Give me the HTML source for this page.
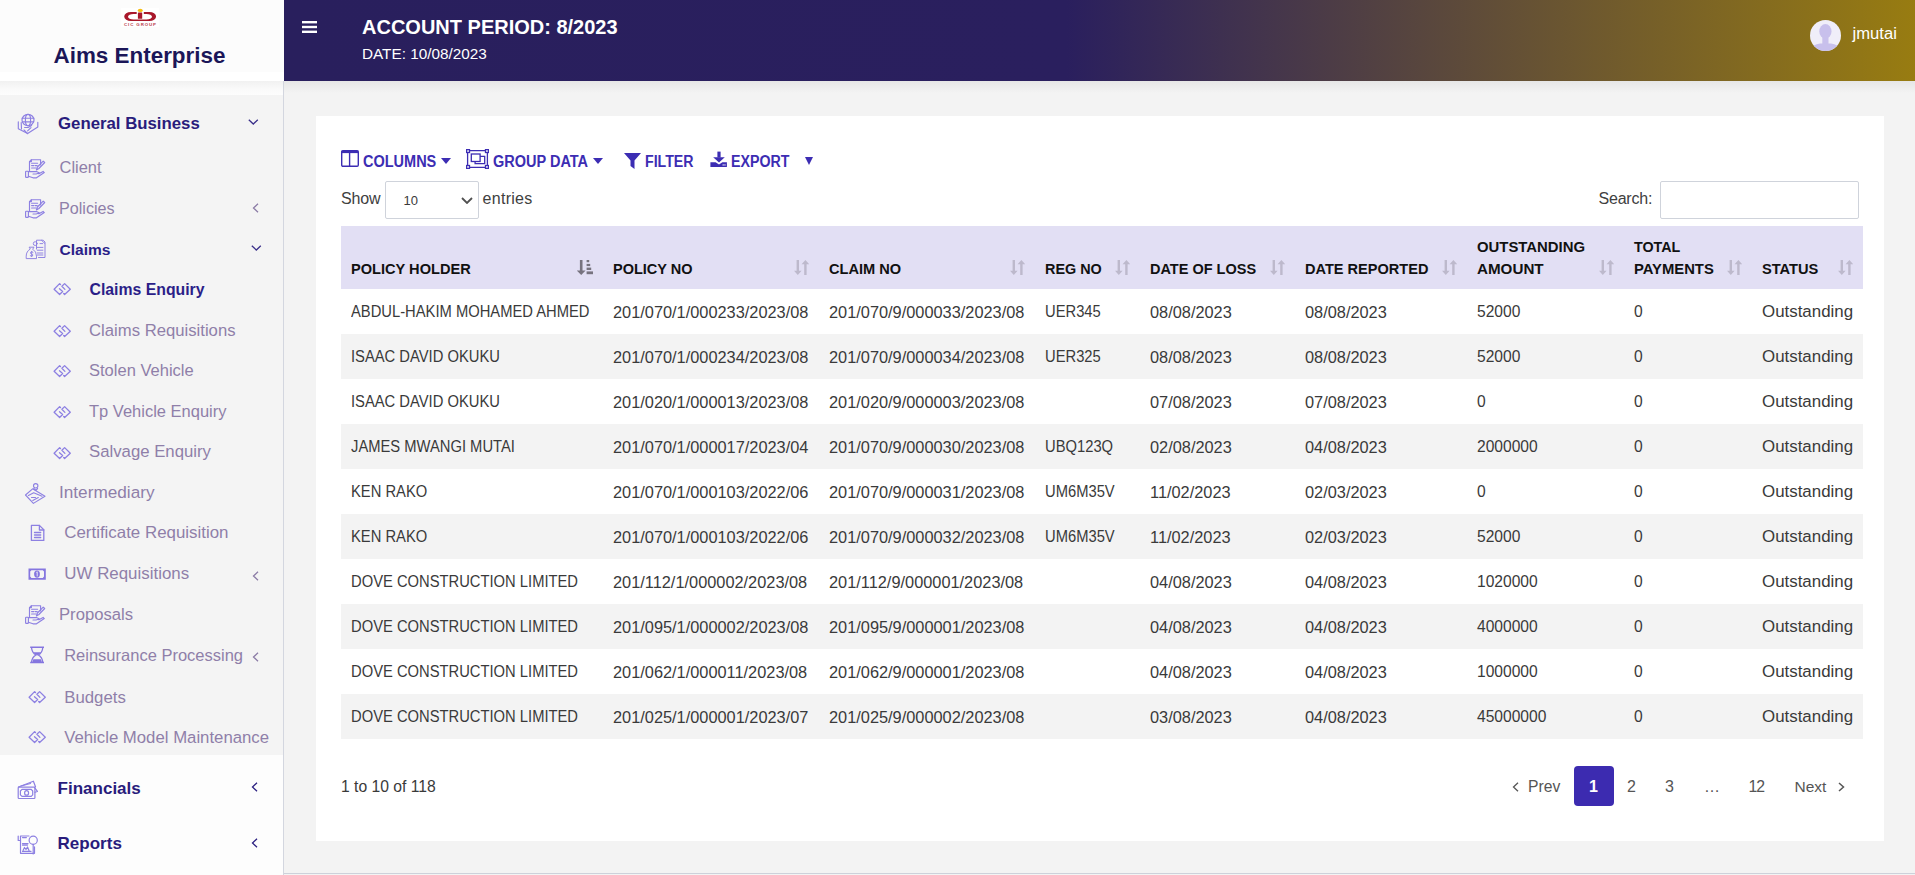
<!DOCTYPE html>
<html><head><meta charset="utf-8"><style>
*{box-sizing:border-box;margin:0;padding:0}
html,body{width:1915px;height:875px;overflow:hidden;background:#f3f3f3;font-family:"Liberation Sans",sans-serif}
.a{position:absolute;white-space:nowrap}
#side{position:absolute;left:0;top:0;width:284px;height:875px;background:#fdfdfd;border-right:1px solid #d3d6df}
#side .top{position:absolute;left:0;top:0;width:284px;height:81px;background:linear-gradient(#fcfcfc 72px,#fff 72px)}
#side .gray{position:absolute;left:0;top:95px;width:283px;height:660px;background:#f4f4f4}
#side .shadow{position:absolute;left:0;top:81px;width:283px;height:14px;background:linear-gradient(#f1f1f1,#fafafa 60%,#fdfdfd)}
.brand{left:54px;top:43px;font-weight:bold;font-size:22px;line-height:24px;color:#1c1760}
.mt{font-size:16px;color:#8f7fa9;line-height:20px}
.mb{font-weight:bold;color:#291d7d}
.mh{font-weight:bold;color:#20186f;font-size:17px}
#hdr{position:absolute;left:284px;top:0;width:1631px;height:81px;background:linear-gradient(to right,#291f5d 0%,#2a1f5e 48%,#987c11 100%)}
#hdrsh{position:absolute;left:284px;top:81px;width:1631px;height:12px;background:linear-gradient(#e6e6e6,#f3f3f3)}
.card{position:absolute;left:316px;top:116px;width:1568px;height:725px;background:#fff}
.tb{font-weight:bold;font-size:14.5px;color:#3c2db3;line-height:20px}
table{position:absolute;left:341px;top:226px;border-collapse:collapse;table-layout:fixed;width:1522px}
th{background:#e2dff4;height:63px;text-align:left;vertical-align:bottom;padding:0 10px 9px 10px;font-size:14.5px;font-weight:bold;color:#111;line-height:22px;position:relative}
th svg{position:absolute;right:10px;top:34px}
td{height:45px;padding:0 10px;font-size:16px;color:#3a3a3a;white-space:nowrap;vertical-align:middle;line-height:20px}
tr.g td{background:#f3f3f3}
td span.s{display:inline-block;transform:scaleX(0.922);transform-origin:0 50%}
td.n{font-size:16.35px}
td.d{font-size:15.6px}
td.o{font-size:16.9px}
.pg{font-size:16px;color:#555;line-height:20px}
</style></head><body>
<div id="side"><div class="top"></div><div class="shadow"></div><div class="gray"></div></div>
<div class="a" style="left:53.5px;top:46.23px;font-size:22.43px;line-height:20px;color:#1b1658;font-weight:bold;">Aims Enterprise</div>
<div class="a" style="left:121px;top:8px;width:38px;height:19px;background:#fff"></div>
<svg class="a" style="left:121px;top:4px" width="40" height="24" viewBox="0 0 40 24" ><path d="M10 8 A6.8 4.5 0 0 0 10 17 H28.3 A6.8 4.5 0 0 0 28.3 8 Z M12.5 9.9 A5.5 2.8 0 0 0 12.5 15.5 H25.5 A5.5 2.8 0 0 0 25.5 9.9 Z" fill="#a9182b" fill-rule="evenodd"/><rect x="15.7" y="7.5" width="7.1" height="2.6" fill="#fff"/><rect x="16.9" y="8.6" width="4.3" height="6.2" rx="0.4" fill="#a9182b"/><ellipse cx="19.25" cy="6.45" rx="2.5" ry="1.6" fill="#f6bd12"/><text x="3" y="22.1" font-size="4.4" font-weight="bold" fill="#b8404c" textLength="32" font-family="Liberation Sans">CIC GROUP</text></svg>
<div class="a" style="left:58px;top:114.08px;font-size:16.8px;line-height:20px;color:#291c7c;font-weight:bold;">General Business</div>
<div class="a" style="left:59.5px;top:157.39px;font-size:16.47px;line-height:20px;color:#8f7fa9;font-weight:normal;">Client</div>
<div class="a" style="left:59px;top:197.51px;font-size:16.14px;line-height:20px;color:#8f7fa9;font-weight:normal;">Policies</div>
<div class="a" style="left:59.5px;top:239.61px;font-size:15.55px;line-height:20px;color:#2b1e88;font-weight:bold;">Claims</div>
<div class="a" style="left:89.5px;top:279.93px;font-size:15.8px;line-height:20px;color:#2b1e88;font-weight:bold;">Claims Enquiry</div>
<div class="a" style="left:89px;top:321.31px;font-size:16.7px;line-height:20px;color:#8f7fa9;font-weight:normal;">Claims Requisitions</div>
<div class="a" style="left:89px;top:361.27px;font-size:16.53px;line-height:20px;color:#8f7fa9;font-weight:normal;">Stolen Vehicle</div>
<div class="a" style="left:89px;top:401.29px;font-size:16.49px;line-height:20px;color:#8f7fa9;font-weight:normal;">Tp Vehicle Enquiry</div>
<div class="a" style="left:89px;top:442.40px;font-size:16.75px;line-height:20px;color:#8f7fa9;font-weight:normal;">Salvage Enquiry</div>
<div class="a" style="left:59px;top:482.44px;font-size:17.2px;line-height:20px;color:#8f7fa9;font-weight:normal;">Intermediary</div>
<div class="a" style="left:64.3px;top:522.95px;font-size:16.89px;line-height:20px;color:#8f7fa9;font-weight:normal;">Certificate Requisition</div>
<div class="a" style="left:64.3px;top:563.94px;font-size:16.9px;line-height:20px;color:#8f7fa9;font-weight:normal;">UW Requisitions</div>
<div class="a" style="left:59px;top:604.53px;font-size:16.66px;line-height:20px;color:#8f7fa9;font-weight:normal;">Proposals</div>
<div class="a" style="left:64.2px;top:645.38px;font-size:16.5px;line-height:20px;color:#8f7fa9;font-weight:normal;">Reinsurance Processing</div>
<div class="a" style="left:64.2px;top:687.58px;font-size:16.81px;line-height:20px;color:#8f7fa9;font-weight:normal;">Budgets</div>
<div class="a" style="left:64.2px;top:727.90px;font-size:16.75px;line-height:20px;color:#8f7fa9;font-weight:normal;">Vehicle Model Maintenance</div>
<div class="a" style="left:57.5px;top:779.09px;font-size:17.05px;line-height:20px;color:#291c7c;font-weight:bold;">Financials</div>
<div class="a" style="left:57.5px;top:833.69px;font-size:17.05px;line-height:20px;color:#291c7c;font-weight:bold;">Reports</div>
<svg class="a" style="left:17px;top:112px" width="22" height="23" viewBox="0 0 22 23" ><g fill="none" stroke="#8d80e2" stroke-width="1.15" stroke-linejoin="round" stroke-linecap="round"><ellipse cx="11" cy="8" rx="6" ry="5.7"/><ellipse cx="11" cy="8" rx="2.6" ry="5.7"/><path d="M5.3 6.2h11.4 M5.3 9.8h11.4"/><path d="M1.3 9.8 V16.8 L10.6 21.6 L20.8 15 V10.2"/><path d="M4.2 10.5 L4.5 17 M10.6 21.6 L7 18 M10.6 18.8 L14 15.6 M7.6 15.5 h3.5 l3.5 -2"/></g></svg>
<svg class="a" style="left:248px;top:118.5px" width="11" height="6" viewBox="0 0 11 6" ><path d="M0.8 0.8 L5.3 5 L9.8 0.8" fill="none" stroke="#3a2f8a" stroke-width="1.3"/></svg>
<svg class="a" style="left:25px;top:159px" width="21" height="20" viewBox="0 0 21 20" ><g fill="none" stroke="#8d80e2" stroke-width="1.15" stroke-linejoin="round" stroke-linecap="round"><path d="M4.5 12 V2.6 L6.4 0.7 H15.6 V6"/><path d="M4.5 2.6 H6.4 V0.7"/><path d="M6.6 4.2h6 M6.6 6.6h2.3 M10.2 6.6h2 M6.6 9h4.5"/><path d="M11.4 11 l1-3 l5.8-5.9 l1.5 1.4 l-5.8 6z"/><rect x="0.6" y="12.2" width="2.8" height="6.2" rx="0.7"/><path d="M3.4 12.6 H11.5 l3 1.4 l-3.5 1 H8 M3.4 17.3 l4.6 1.5 h3.5 l7.8-5.2 l-1.2-1.2 l-4.2 2.4"/></g></svg>
<svg class="a" style="left:25px;top:199px" width="21" height="20" viewBox="0 0 21 20" ><g fill="none" stroke="#8d80e2" stroke-width="1.15" stroke-linejoin="round" stroke-linecap="round"><path d="M4.5 12 V2.6 L6.4 0.7 H15.6 V6"/><path d="M4.5 2.6 H6.4 V0.7"/><path d="M6.6 4.2h6 M6.6 6.6h2.3 M10.2 6.6h2 M6.6 9h4.5"/><path d="M11.4 11 l1-3 l5.8-5.9 l1.5 1.4 l-5.8 6z"/><rect x="0.6" y="12.2" width="2.8" height="6.2" rx="0.7"/><path d="M3.4 12.6 H11.5 l3 1.4 l-3.5 1 H8 M3.4 17.3 l4.6 1.5 h3.5 l7.8-5.2 l-1.2-1.2 l-4.2 2.4"/></g></svg>
<svg class="a" style="left:252px;top:203px" width="7" height="10" viewBox="0 0 7 10" ><path d="M6 0.8 L1.5 5 L6 9.2" fill="none" stroke="#8a7aa5" stroke-width="1.3"/></svg>
<svg class="a" style="left:20px;top:236px" width="27" height="25" viewBox="0 0 27 25" ><g fill="none" stroke="#8d80e2" stroke-width="0.95" stroke-linejoin="round" stroke-linecap="round"><path d="M16.5 13 V4.2 H23.2 L25 6 V21.5 H18.5"/><path d="M21.5 4.3 L24.8 7.4"/><circle cx="15.2" cy="7.6" r="1.9"/><path d="M20 7.6h2.7 M17.3 11.4h5.6 M17.3 14.2h5.6 M17.3 17h5.6 M17.3 19h5.6"/><path d="M9.5 11.2 h4.5 l-1.3 2 q3.8 2.2 3.8 7 v2.4 H6.2 v-2.4 q0-4.8 3.8-7z"/><path d="M13 16.3 q-1.5-1.2-2.4 0 q-0.7 1.2 1.2 1.8 q1.6 0.6 0.7 1.8 q-1 1-2.3-0.2 M11.7 15.3 v5.2"/></g></svg>
<svg class="a" style="left:251px;top:245px" width="11" height="6" viewBox="0 0 11 6" ><path d="M0.8 0.8 L5.3 5 L9.8 0.8" fill="none" stroke="#3a2f8a" stroke-width="1.3"/></svg>
<svg class="a" style="left:50px;top:280.0px" width="26" height="20" viewBox="0 0 26 20" ><g fill="none" stroke="#8d80e2" stroke-width="1.3" stroke-linejoin="round" stroke-linecap="round"><path d="M10.5 4.5 L9.6 3.6 L4.1 9.2 L9.6 14.5 L12.6 11.5 L9.5 8.8"/><path d="M13.7 13.5 L14.6 14.5 L20.3 9.2 L14.6 3.6 L11.9 6.3 L14.9 9.4"/></g></svg>
<svg class="a" style="left:50px;top:321.7px" width="26" height="20" viewBox="0 0 26 20" ><g fill="none" stroke="#8d80e2" stroke-width="1.3" stroke-linejoin="round" stroke-linecap="round"><path d="M10.5 4.5 L9.6 3.6 L4.1 9.2 L9.6 14.5 L12.6 11.5 L9.5 8.8"/><path d="M13.7 13.5 L14.6 14.5 L20.3 9.2 L14.6 3.6 L11.9 6.3 L14.9 9.4"/></g></svg>
<svg class="a" style="left:50px;top:361.7px" width="26" height="20" viewBox="0 0 26 20" ><g fill="none" stroke="#8d80e2" stroke-width="1.3" stroke-linejoin="round" stroke-linecap="round"><path d="M10.5 4.5 L9.6 3.6 L4.1 9.2 L9.6 14.5 L12.6 11.5 L9.5 8.8"/><path d="M13.7 13.5 L14.6 14.5 L20.3 9.2 L14.6 3.6 L11.9 6.3 L14.9 9.4"/></g></svg>
<svg class="a" style="left:50px;top:402.5px" width="26" height="20" viewBox="0 0 26 20" ><g fill="none" stroke="#8d80e2" stroke-width="1.3" stroke-linejoin="round" stroke-linecap="round"><path d="M10.5 4.5 L9.6 3.6 L4.1 9.2 L9.6 14.5 L12.6 11.5 L9.5 8.8"/><path d="M13.7 13.5 L14.6 14.5 L20.3 9.2 L14.6 3.6 L11.9 6.3 L14.9 9.4"/></g></svg>
<svg class="a" style="left:50px;top:443.7px" width="26" height="20" viewBox="0 0 26 20" ><g fill="none" stroke="#8d80e2" stroke-width="1.3" stroke-linejoin="round" stroke-linecap="round"><path d="M10.5 4.5 L9.6 3.6 L4.1 9.2 L9.6 14.5 L12.6 11.5 L9.5 8.8"/><path d="M13.7 13.5 L14.6 14.5 L20.3 9.2 L14.6 3.6 L11.9 6.3 L14.9 9.4"/></g></svg>
<svg class="a" style="left:20px;top:480px" width="27" height="26" viewBox="0 0 27 26" ><g fill="none" stroke="#8d80e2" stroke-width="1.1" stroke-linejoin="round" stroke-linecap="round"><circle cx="15.7" cy="5.8" r="2.2"/><path d="M13.8 8.5 l1.9 2 l1.9-2"/><path d="M5.5 15 L12.6 8.8 L25 16.3 L13.4 23.4 Z"/><path d="M8.4 15.5 L13.7 12.8 L22 16.3 M11.5 17.5 h4 M12.8 20.5 l5.5-3"/></g></svg>
<svg class="a" style="left:24px;top:520px" width="26" height="24" viewBox="0 0 26 24" ><g fill="none" stroke="#8d80e2" stroke-width="1.3" stroke-linejoin="round" stroke-linecap="round"><path d="M7.4 5.4 H15.4 L19.8 9.7 V20.4 H7.4 Z"/><path d="M15.4 5.4 V10 H19.8"/><path d="M10.5 12.5 h6.2 M10.5 15 h6.2 M10.5 17.5 h6.2"/></g></svg>
<svg class="a" style="left:24px;top:562px" width="26" height="24" viewBox="0 0 26 24" ><path d="M4.5 6.4 H21.8 V17.8 H4.5 Z M7.4 8.2 L6.2 9.5 V14.6 L7.4 15.9 H18.8 L20 14.6 V9.5 L18.8 8.2 Z" fill="#8576df" fill-rule="evenodd"/><ellipse cx="13" cy="12.1" rx="2.9" ry="3.6" fill="#8576df"/><path d="M12.4 10.4 l0.8-0.6 v4.6" stroke="#f4f4f4" stroke-width="0.9" fill="none"/></svg>
<svg class="a" style="left:252px;top:571px" width="7" height="10" viewBox="0 0 7 10" ><path d="M6 0.8 L1.5 5 L6 9.2" fill="none" stroke="#8a7aa5" stroke-width="1.3"/></svg>
<svg class="a" style="left:25px;top:605px" width="21" height="20" viewBox="0 0 21 20" ><g fill="none" stroke="#8d80e2" stroke-width="1.15" stroke-linejoin="round" stroke-linecap="round"><path d="M4.5 12 V2.6 L6.4 0.7 H15.6 V6"/><path d="M4.5 2.6 H6.4 V0.7"/><path d="M6.6 4.2h6 M6.6 6.6h2.3 M10.2 6.6h2 M6.6 9h4.5"/><path d="M11.4 11 l1-3 l5.8-5.9 l1.5 1.4 l-5.8 6z"/><rect x="0.6" y="12.2" width="2.8" height="6.2" rx="0.7"/><path d="M3.4 12.6 H11.5 l3 1.4 l-3.5 1 H8 M3.4 17.3 l4.6 1.5 h3.5 l7.8-5.2 l-1.2-1.2 l-4.2 2.4"/></g></svg>
<svg class="a" style="left:24px;top:642px" width="26" height="24" viewBox="0 0 26 24" ><path d="M6.2 5.2 H20 M6.2 20.6 H20" stroke="#8576df" stroke-width="1.5"/><path d="M7.5 5.5 Q8 11 12 13 Q8 15 7.5 20.5 M18.8 5.5 Q18.3 11 14.3 13 Q18.3 15 18.8 20.5" stroke="#8576df" stroke-width="1.3" fill="none"/><path d="M9.3 10.3 H17 Q15.5 12.5 13.15 13.2 Q10.8 12.5 9.3 10.3 Z M9.3 17.2 H17 Q17.6 18.8 17.9 20.3 H8.4 Q8.7 18.8 9.3 17.2Z" fill="#8576df"/></svg>
<svg class="a" style="left:252px;top:652px" width="7" height="10" viewBox="0 0 7 10" ><path d="M6 0.8 L1.5 5 L6 9.2" fill="none" stroke="#8a7aa5" stroke-width="1.3"/></svg>
<svg class="a" style="left:25.2px;top:687.7px" width="26" height="20" viewBox="0 0 26 20" ><g fill="none" stroke="#8d80e2" stroke-width="1.3" stroke-linejoin="round" stroke-linecap="round"><path d="M10.5 4.5 L9.6 3.6 L4.1 9.2 L9.6 14.5 L12.6 11.5 L9.5 8.8"/><path d="M13.7 13.5 L14.6 14.5 L20.3 9.2 L14.6 3.6 L11.9 6.3 L14.9 9.4"/></g></svg>
<svg class="a" style="left:25.2px;top:728.4px" width="26" height="20" viewBox="0 0 26 20" ><g fill="none" stroke="#8d80e2" stroke-width="1.3" stroke-linejoin="round" stroke-linecap="round"><path d="M10.5 4.5 L9.6 3.6 L4.1 9.2 L9.6 14.5 L12.6 11.5 L9.5 8.8"/><path d="M13.7 13.5 L14.6 14.5 L20.3 9.2 L14.6 3.6 L11.9 6.3 L14.9 9.4"/></g></svg>
<svg class="a" style="left:12px;top:776px" width="28" height="26" viewBox="0 0 28 26" ><g fill="none" stroke="#8d80e2" stroke-width="1.2" stroke-linejoin="round" stroke-linecap="round"><rect x="6.2" y="11.2" width="16.7" height="11.3" rx="0.8"/><path d="M10 13.4 H19.2 L20.7 15 V18.8 L19.2 20.4 H10 L8.4 18.8 V15 Z"/><ellipse cx="14.6" cy="16.9" rx="2" ry="2.3"/><path d="M6.5 11 L21.4 5.2 L23.5 10.8 M22.6 11.5 L25.4 15.4 L23 16.3"/><path d="M9 10 L18.5 7.5"/></g></svg>
<svg class="a" style="left:251px;top:782px" width="7" height="10" viewBox="0 0 7 10" ><path d="M6 0.8 L1.5 5 L6 9.2" fill="none" stroke="#2a1f80" stroke-width="1.3"/></svg>
<svg class="a" style="left:12px;top:831px" width="28" height="26" viewBox="0 0 28 26" ><g fill="none" stroke="#8d80e2" stroke-width="1.2" stroke-linejoin="round" stroke-linecap="round"><path d="M8.5 5 V22.3 H22.5 V15.8 M8.5 5 H17"/><path d="M6.2 5 v4.5 h2.3"/><circle cx="21.2" cy="9.2" r="4.1"/><path d="M21.2 13.3 V23"/><path d="M10.5 6.6h3.9 M10.5 12.7 h5.5 M10.5 14.1h5 M10.5 20.4 h8.5 M11 19.5 l1.5-3 l1.5 2 l1.5-2.5 l1.5 3.5"/></g></svg>
<svg class="a" style="left:251px;top:838px" width="7" height="10" viewBox="0 0 7 10" ><path d="M6 0.8 L1.5 5 L6 9.2" fill="none" stroke="#2a1f80" stroke-width="1.3"/></svg>
<div id="hdr"></div><div id="hdrsh"></div>
<svg class="a" style="left:302px;top:21px" width="15" height="12" viewBox="0 0 15 12" ><rect x="0" y="0" width="15" height="2.4" fill="#fff"/><rect x="0" y="4.8" width="15" height="2.4" fill="#fff"/><rect x="0" y="9.6" width="15" height="2.4" fill="#fff"/></svg>
<div class="a " style="left:362px;top:16px;font-weight:bold;font-size:20px;line-height:22px;color:#fff">ACCOUNT PERIOD: 8/2023</div>
<div class="a" style="left:362px;top:43.50px;font-size:15.3px;line-height:20px;color:#fff;font-weight:normal;">DATE: 10/08/2023</div>
<svg class="a" style="left:1810px;top:20px" width="31" height="31" viewBox="0 0 31 31" ><defs><clipPath id="cc"><circle cx="15.5" cy="15.5" r="15.5"/></clipPath></defs><circle cx="15.5" cy="15.5" r="15.5" fill="#f0eef9"/><g clip-path="url(#cc)" fill="#c8c0ec"><ellipse cx="15.4" cy="11.4" rx="6.1" ry="7.3"/><rect x="12.3" y="15" width="6.2" height="9"/><path d="M-1 33 Q1 24.5 10 23.6 H21 Q30 24.5 32 33z"/></g></svg>
<div class="a " style="left:1852.5px;top:24px;font-size:16.65px;line-height:20px;color:#fff">jmutai</div>
<div class="card"></div>
<svg class="a" style="left:341px;top:150px" width="18" height="17" viewBox="0 0 18 17" ><rect x="0.7" y="0.7" width="16.6" height="15.6" rx="1.2" fill="none" stroke="#3c2db3" stroke-width="1.4"/><rect x="0.7" y="0.7" width="16.6" height="2.4" fill="#3c2db3"/><path d="M8.6 1v15" stroke="#3c2db3" stroke-width="1.4"/></svg>
<div class="a tb" style="left:363px;top:152px;font-size:16px;transform:scaleX(0.906);transform-origin:0 0">COLUMNS</div>
<svg class="a" style="left:441px;top:158px" width="10" height="6" viewBox="0 0 10 6" ><path d="M0 0h10L5 6z" fill="#3c2db3"/></svg>
<svg class="a" style="left:466px;top:149px" width="23" height="20" viewBox="0 0 23 20" ><g fill="none" stroke="#3c2db3" stroke-width="1.3"><path d="M3.5 1.6H19.5 M3.5 18.4H19.5 M1.6 3.5V16.5 M21.4 3.5V16.5"/><rect x="5.3" y="5" width="8.8" height="7.5"/><path d="M14.1 7.4H18.7V14.6H9.1V12.5"/><rect x="0.6" y="0.6" width="2.9" height="2.9" fill="#fff"/><rect x="19.5" y="0.6" width="2.9" height="2.9" fill="#fff"/><rect x="0.6" y="16.5" width="2.9" height="2.9" fill="#fff"/><rect x="19.5" y="16.5" width="2.9" height="2.9" fill="#fff"/></g></svg>
<div class="a tb" style="left:493px;top:152px;font-size:16px;transform:scaleX(0.906);transform-origin:0 0">GROUP DATA</div>
<svg class="a" style="left:593px;top:158px" width="10" height="6" viewBox="0 0 10 6" ><path d="M0 0h10L5 6z" fill="#3c2db3"/></svg>
<svg class="a" style="left:624px;top:153px" width="17" height="16" viewBox="0 0 17 16" ><path d="M0 0h17L10.5 7.5V16L6.5 13V7.5z" fill="#3c2db3"/></svg>
<div class="a tb" style="left:645px;top:152px;font-size:16px;transform:scaleX(0.885);transform-origin:0 0">FILTER</div>
<svg class="a" style="left:710px;top:151px" width="18" height="17" viewBox="0 0 18 17" ><rect x="7.4" y="0.6" width="3.2" height="6" fill="#3c2db3"/><path d="M3.2 6.2H14.8L9 11.6Z" fill="#3c2db3"/><path d="M0.4 11.2H5.6L9 13.6L12.4 11.2H16.9V16.1H0.4Z" fill="#3c2db3"/><rect x="12.6" y="13.3" width="1.1" height="1.3" fill="#fff"/><rect x="14.4" y="13.3" width="1.1" height="1.3" fill="#fff"/></svg>
<div class="a tb" style="left:731px;top:152px;font-size:16px;transform:scaleX(0.888);transform-origin:0 0">EXPORT</div>
<svg class="a" style="left:805px;top:157px" width="8" height="8" viewBox="0 0 8 8" ><path d="M0 0h8L4 8z" fill="#3c2db3"/></svg>
<div class="a" style="left:341px;top:188.96px;font-size:16px;line-height:20px;color:#404040;font-weight:normal;letter-spacing:-0.12px">Show</div>
<div class="a" style="left:385px;top:181px;width:94px;height:38px;border:1px solid #cfd3db;border-radius:2px;background:#fff"></div>
<div class="a " style="left:403.5px;top:193px;font-size:13px;line-height:16px;color:#3a3a3a">10</div>
<svg class="a" style="left:461px;top:197px" width="12" height="7" viewBox="0 0 12 7" ><path d="M1 1l5 5l5-5" fill="none" stroke="#505050" stroke-width="1.8"/></svg>
<div class="a" style="left:482.5px;top:188.96px;font-size:16px;line-height:20px;color:#404040;font-weight:normal;letter-spacing:0.3px">entries</div>
<div class="a" style="left:1598.5px;top:188.96px;font-size:16px;line-height:20px;color:#404040;font-weight:normal;letter-spacing:-0.22px">Search:</div>
<div class="a" style="left:1660px;top:181px;width:199px;height:38px;border:1px solid #cfd3db;border-radius:2px;background:#fff"></div>
<table><colgroup><col style="width:262px"><col style="width:216px"><col style="width:216px"><col style="width:105px"><col style="width:155px"><col style="width:172px"><col style="width:157px"><col style="width:128px"><col style="width:111px"></colgroup><tr><th><span style="font-size:14.6px">POLICY HOLDER</span><svg style="right:10px" width="16" height="15" viewBox="0 0 16 15"><path d="M2.9 0h2.6v10.6h3.1L4.2 15L-0.1 10.6h3z" fill="#77737f"/><g fill="#77737f"><rect x="9.6" y="0" width="2.6" height="2.2"/><rect x="9.6" y="3.9" width="3.6" height="2.2"/><rect x="9.6" y="7.6" width="4.6" height="2.4"/><rect x="9.6" y="11.4" width="6.4" height="2.8"/></g></svg></th><th><span style="font-size:14.5px">POLICY NO</span><svg width="15" height="15" viewBox="0 0 15 15"><path d="M2.6 0h2.4v10.8h2.6L3.8 15L0 10.8h2.6z" fill="#bdb9cc"/><path d="M10.2 15h2.4V4.2h2.6L11.4 0L7.6 4.2h2.6z" fill="#bdb9cc"/></svg></th><th><span style="font-size:14.6px">CLAIM NO</span><svg width="15" height="15" viewBox="0 0 15 15"><path d="M2.6 0h2.4v10.8h2.6L3.8 15L0 10.8h2.6z" fill="#bdb9cc"/><path d="M10.2 15h2.4V4.2h2.6L11.4 0L7.6 4.2h2.6z" fill="#bdb9cc"/></svg></th><th><span style="font-size:14.4px">REG NO</span><svg width="15" height="15" viewBox="0 0 15 15"><path d="M2.6 0h2.4v10.8h2.6L3.8 15L0 10.8h2.6z" fill="#bdb9cc"/><path d="M10.2 15h2.4V4.2h2.6L11.4 0L7.6 4.2h2.6z" fill="#bdb9cc"/></svg></th><th><span style="font-size:14.5px">DATE OF LOSS</span><svg width="15" height="15" viewBox="0 0 15 15"><path d="M2.6 0h2.4v10.8h2.6L3.8 15L0 10.8h2.6z" fill="#bdb9cc"/><path d="M10.2 15h2.4V4.2h2.6L11.4 0L7.6 4.2h2.6z" fill="#bdb9cc"/></svg></th><th><span style="font-size:14.55px">DATE REPORTED</span><svg width="15" height="15" viewBox="0 0 15 15"><path d="M2.6 0h2.4v10.8h2.6L3.8 15L0 10.8h2.6z" fill="#bdb9cc"/><path d="M10.2 15h2.4V4.2h2.6L11.4 0L7.6 4.2h2.6z" fill="#bdb9cc"/></svg></th><th><span style="font-size:14.9px">OUTSTANDING</span><br><span style="font-size:15.2px">AMOUNT</span><svg width="15" height="15" viewBox="0 0 15 15"><path d="M2.6 0h2.4v10.8h2.6L3.8 15L0 10.8h2.6z" fill="#bdb9cc"/><path d="M10.2 15h2.4V4.2h2.6L11.4 0L7.6 4.2h2.6z" fill="#bdb9cc"/></svg></th><th><span style="font-size:14.3px">TOTAL</span><br><span style="font-size:14.8px">PAYMENTS</span><svg width="15" height="15" viewBox="0 0 15 15"><path d="M2.6 0h2.4v10.8h2.6L3.8 15L0 10.8h2.6z" fill="#bdb9cc"/><path d="M10.2 15h2.4V4.2h2.6L11.4 0L7.6 4.2h2.6z" fill="#bdb9cc"/></svg></th><th><span style="font-size:14.65px">STATUS</span><svg width="15" height="15" viewBox="0 0 15 15"><path d="M2.6 0h2.4v10.8h2.6L3.8 15L0 10.8h2.6z" fill="#bdb9cc"/><path d="M10.2 15h2.4V4.2h2.6L11.4 0L7.6 4.2h2.6z" fill="#bdb9cc"/></svg></th></tr><tr><td><span class="s">ABDUL-HAKIM MOHAMED AHMED</span></td><td class="n">201/070/1/000233/2023/08</td><td class="n">201/070/9/000033/2023/08</td><td><span class="s">UER345</span></td><td class="n">08/08/2023</td><td class="n">08/08/2023</td><td class="d">52000</td><td class="d">0</td><td class="o">Outstanding</td></tr><tr class="g"><td><span class="s">ISAAC DAVID OKUKU</span></td><td class="n">201/070/1/000234/2023/08</td><td class="n">201/070/9/000034/2023/08</td><td><span class="s">UER325</span></td><td class="n">08/08/2023</td><td class="n">08/08/2023</td><td class="d">52000</td><td class="d">0</td><td class="o">Outstanding</td></tr><tr><td><span class="s">ISAAC DAVID OKUKU</span></td><td class="n">201/020/1/000013/2023/08</td><td class="n">201/020/9/000003/2023/08</td><td><span class="s"></span></td><td class="n">07/08/2023</td><td class="n">07/08/2023</td><td class="d">0</td><td class="d">0</td><td class="o">Outstanding</td></tr><tr class="g"><td><span class="s">JAMES MWANGI MUTAI</span></td><td class="n">201/070/1/000017/2023/04</td><td class="n">201/070/9/000030/2023/08</td><td><span class="s">UBQ123Q</span></td><td class="n">02/08/2023</td><td class="n">04/08/2023</td><td class="d">2000000</td><td class="d">0</td><td class="o">Outstanding</td></tr><tr><td><span class="s">KEN RAKO</span></td><td class="n">201/070/1/000103/2022/06</td><td class="n">201/070/9/000031/2023/08</td><td><span class="s">UM6M35V</span></td><td class="n">11/02/2023</td><td class="n">02/03/2023</td><td class="d">0</td><td class="d">0</td><td class="o">Outstanding</td></tr><tr class="g"><td><span class="s">KEN RAKO</span></td><td class="n">201/070/1/000103/2022/06</td><td class="n">201/070/9/000032/2023/08</td><td><span class="s">UM6M35V</span></td><td class="n">11/02/2023</td><td class="n">02/03/2023</td><td class="d">52000</td><td class="d">0</td><td class="o">Outstanding</td></tr><tr><td><span class="s">DOVE CONSTRUCTION LIMITED</span></td><td class="n">201/112/1/000002/2023/08</td><td class="n">201/112/9/000001/2023/08</td><td><span class="s"></span></td><td class="n">04/08/2023</td><td class="n">04/08/2023</td><td class="d">1020000</td><td class="d">0</td><td class="o">Outstanding</td></tr><tr class="g"><td><span class="s">DOVE CONSTRUCTION LIMITED</span></td><td class="n">201/095/1/000002/2023/08</td><td class="n">201/095/9/000001/2023/08</td><td><span class="s"></span></td><td class="n">04/08/2023</td><td class="n">04/08/2023</td><td class="d">4000000</td><td class="d">0</td><td class="o">Outstanding</td></tr><tr><td><span class="s">DOVE CONSTRUCTION LIMITED</span></td><td class="n">201/062/1/000011/2023/08</td><td class="n">201/062/9/000001/2023/08</td><td><span class="s"></span></td><td class="n">04/08/2023</td><td class="n">04/08/2023</td><td class="d">1000000</td><td class="d">0</td><td class="o">Outstanding</td></tr><tr class="g"><td><span class="s">DOVE CONSTRUCTION LIMITED</span></td><td class="n">201/025/1/000001/2023/07</td><td class="n">201/025/9/000002/2023/08</td><td><span class="s"></span></td><td class="n">03/08/2023</td><td class="n">04/08/2023</td><td class="d">45000000</td><td class="d">0</td><td class="o">Outstanding</td></tr></table>
<div class="a pg" style="left:341px;top:777px;color:#3a3a3a;font-size:15.7px">1 to 10 of 118</div>
<svg class="a" style="left:1512px;top:782px" width="7" height="10" viewBox="0 0 7 10" ><path d="M6 0.8 L1.5 5 L6 9.2" fill="none" stroke="#555" stroke-width="1.3"/></svg>
<div class="a pg" style="left:1528px;top:777px;font-size:15.7px">Prev</div>
<div class="a" style="left:1574px;top:766px;width:40px;height:40px;border-radius:4px;background:#3c2bb0"></div>
<div class="a pg" style="left:1589px;top:777px;color:#fff;font-weight:bold">1</div>
<div class="a pg" style="left:1627px;top:777px;">2</div>
<div class="a pg" style="left:1665px;top:777px;">3</div>
<div class="a pg" style="left:1704px;top:777px;">…</div>
<div class="a pg" style="left:1748.5px;top:777px;font-size:15.8px;letter-spacing:-1px">12</div>
<div class="a pg" style="left:1794.5px;top:777px;font-size:15.5px">Next</div>
<svg class="a" style="left:1838px;top:782px" width="7" height="10" viewBox="0 0 7 10" ><path d="M1 1 L5.5 5 L1 9" fill="none" stroke="#555" stroke-width="1.5"/></svg>
<div class="a" style="left:284px;top:873px;width:1631px;height:1px;background:#cdd1da"></div>
</body></html>
